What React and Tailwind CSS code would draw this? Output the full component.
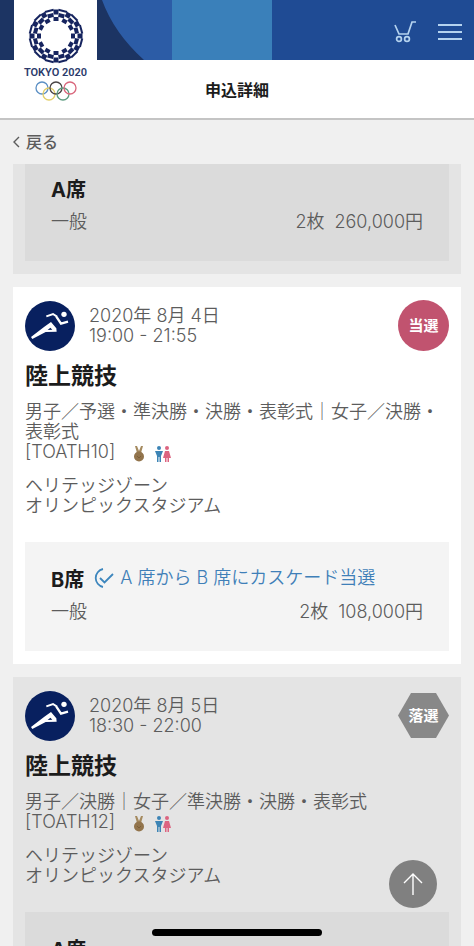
import React from 'react';

const applications = [
  {
    id: 'previous',
    won: false,
    continued: true,
    seat: { rank: 'A席', price: '260,000円' }
  },
  {
    id: 'TOATH10',
    won: true,
    date: '2020年 8月 4日',
    time: '19:00 - 21:55',
    sport: '陸上競技',
    detail: '男子／予選・準決勝・決勝・表彰式｜女子／決勝・表彰式',
    seat: { rank: 'B席', price: '108,000円', cascade: 'A 席から B 席にカスケード当選' }
  },
  {
    id: 'TOATH12',
    won: false,
    date: '2020年 8月 5日',
    time: '18:30 - 22:00',
    sport: '陸上競技',
    detail: '男子／決勝｜女子／準決勝・決勝・表彰式',
    seat: { rank: 'A席', price: '260,000円' }
  }
];

const emblemRings = [
  { radius: 26, width: 9, height: 2, count: 12, offset: 15 },
  { radius: 24, width: 5, height: 5, count: 12, offset: 0 },
  { radius: 21, width: 6, height: 4, count: 12, offset: 15 },
  { radius: 17, width: 5, height: 4, count: 12, offset: 0 }
];

const Emblem = () => (
  <svg viewBox="-29 -29 58 58" className="size-[58px]" fill="#16245f" aria-hidden="true">
    {emblemRings.map(ring =>
      Array.from({ length: ring.count }, (_, i) => (
        <rect
          key={`${ring.radius}-${i}`}
          x={-ring.width / 2}
          y={-ring.radius - ring.height / 2}
          width={ring.width}
          height={ring.height}
          transform={`rotate(${(360 / ring.count) * i + ring.offset})`}
        />
      ))
    )}
  </svg>
);

const Rings = () => (
  <svg viewBox="0 0 42 20" className="h-5 w-[42px]" fill="none" strokeWidth="1.3" aria-hidden="true">
    <circle cx="7" cy="7" r="6" stroke="#5b8fc4" />
    <circle cx="14" cy="13" r="6" stroke="#e3cf6a" />
    <circle cx="21" cy="7" r="6" stroke="#4a4444" />
    <circle cx="28" cy="13" r="6" stroke="#5d9c80" />
    <circle cx="35" cy="7" r="6" stroke="#d9677c" />
  </svg>
);

const AthleticsIcon = () => (
  <svg viewBox="0 0 150 150" className="size-[50px] shrink-0" role="img" aria-label="陸上競技">
    <circle cx="75" cy="75" r="75" fill="#08205f" />
    <g fill="none" stroke="#fff" strokeLinejoin="miter">
      <path d="M64 46 L84 39 L96 47" strokeWidth="6" />
      <path d="M94 47 L108 68 L129 62" strokeWidth="7" />
    </g>
    <circle cx="117" cy="40" r="8" fill="#fff" />
    <path
      d="M18 108 L58 77 L78 63 L94 82 L95 92 L62 93 L22 114 Z M68 87 L82 86 L76 80 Z"
      fill="#fff"
      fillRule="evenodd"
    />
  </svg>
);

const MedalIcon = () => (
  <svg viewBox="0 0 12 16" className="h-4 w-3" role="img" aria-label="メダル">
    <path d="M2 0 L4 0 L6 5 L8 0 L10 0 L8 7 L4 7 Z" fill="#a58a5f" />
    <circle cx="6" cy="10.5" r="5" fill="#92744c" />
    <path d="M4 10 L6 12 L8 10" fill="none" stroke="#7b5f3a" strokeWidth="1" />
  </svg>
);

const MixedIcon = () => (
  <svg viewBox="0 0 16 16" className="size-4" role="img" aria-label="男女">
    <circle cx="4" cy="2" r="2" fill="#3c84b5" />
    <path d="M0 5 H8 L6 10 V16 H4.5 V11 H3.5 V16 H2 V10 Z" fill="#3c84b5" />
    <circle cx="12" cy="2" r="2" fill="#dc6480" />
    <path d="M10 5 H14 L16 12 H14 V16 H12.5 V12 H11.5 V16 H10 V12 H8 Z" fill="#dc6480" />
  </svg>
);

const ResultBadge = ({ won }) => (
  <div className="relative ml-auto flex size-[51px] shrink-0 items-center justify-center text-[15px] leading-5 font-bold text-white">
    <svg viewBox="0 0 51 51" className="absolute inset-0" aria-hidden="true">
      {won ? (
        <circle cx="25.5" cy="25.5" r="25.5" fill="#c1536f" />
      ) : (
        <path d="M13 3 H38 L51 25.5 L38 48 H13 L0 25.5 Z" fill="#888" />
      )}
    </svg>
    <span className="relative">{won ? '当選' : '落選'}</span>
  </div>
);

const SeatBox = ({ seat, won, continued }) => (
  <div className={`px-[26px] pb-[29px] ${continued ? 'pt-3' : 'pt-6'} ${won ? 'bg-[#f4f4f4]' : 'bg-[#dbdbdb]'}`}>
    <div className="flex h-7 items-center gap-2">
      <h3 className="text-xl leading-7 font-bold text-[#1c1c1c]">{seat.rank}</h3>
      {seat.cascade && (
        <p className="flex items-center gap-1.5 pb-1 leading-5 text-[#3f7fb8]">
          <svg viewBox="0 0 22 20" className="h-5 w-[22px]" fill="none" stroke="#3d86bd" strokeWidth="1.8" aria-hidden="true">
            <path d="M11 1 A 9.2 9.2 0 0 0 11 19" />
            <path d="M8 10 L12.5 14.5 L21 6" />
          </svg>
          {seat.cascade}
        </p>
      )}
    </div>
    <div className="mt-2 flex justify-between leading-5">
      <span>一般</span>
      <span className="flex gap-2.5">
        <span>2枚</span>
        <span>{seat.price}</span>
      </span>
    </div>
  </div>
);

const ApplicationCard = ({ item }) => (
  <article className={`px-3 pb-[13px] ${item.won ? 'bg-white' : 'bg-[#e4e4e4]'}`}>
    {!item.continued && (
      <>
        <div className="flex items-center pt-[13px]">
          <AthleticsIcon />
          <p className="ml-3.5 leading-5">
            {item.date}
            <br />
            {item.time}
          </p>
          <ResultBadge won={item.won} />
        </div>
        <h2 className="mt-[11px] text-[23px] leading-7 font-bold text-[#1c1c1c]">{item.sport}</h2>
        <p className="mt-3 leading-5">{item.detail}</p>
        <div className="flex h-5 items-center leading-5">
          <span>[{item.id}]</span>
          <span className="ml-[18px] flex gap-2.5 pt-1">
            <MedalIcon />
            <MixedIcon />
          </span>
        </div>
        <p className="mt-3.5 mb-[26px] leading-5">
          ヘリテッジゾーン
          <br />
          オリンピックスタジアム
        </p>
      </>
    )}
    <SeatBox seat={item.seat} won={item.won} continued={item.continued} />
  </article>
);

const Header = () => (
  <header className="relative shrink-0 border-b-2 border-[#c4c4c4] bg-white">
    <div className="flex h-[60px] bg-[#1f4b94]">
      <svg viewBox="0 0 172 60" className="h-[60px] w-[172px] shrink-0" aria-hidden="true">
        <rect width="172" height="60" fill="#2c5ca6" />
        <path d="M0 0 H102 Q114 33 144 60 H0 Z" fill="#1c3463" />
      </svg>
      <div className="w-[100px] shrink-0 bg-[#3a80ba]" />
      <div className="flex flex-1 items-center justify-end gap-[22px] pt-1 pr-3">
        <button type="button" aria-label="カート">
          <svg viewBox="0 0 22 22" className="size-[22px]" fill="none" stroke="#b5d3ef" strokeWidth="1.7">
            <path d="M1 4 L5 13 H14 L18 1 H22" />
            <circle cx="5" cy="18" r="2.4" />
            <circle cx="13" cy="18" r="2.4" />
          </svg>
        </button>
        <button type="button" aria-label="メニュー">
          <svg viewBox="0 0 24 18" className="h-[18px] w-6" stroke="#b5d3ef" strokeWidth="1.8">
            <path d="M0 2 H24 M0 9 H24 M0 16 H24" />
          </svg>
        </button>
      </div>
    </div>
    <h1 className="flex h-[58px] items-center justify-center pt-0.5 text-base leading-6 font-bold text-[#1c1c1c]">申込詳細</h1>
    <a href="#top" className="absolute top-0 left-3.5 flex h-[118px] w-[83px] flex-col items-center bg-white pt-[7px]">
      <Emblem />
      <span className="font-['Roboto'] text-[11px] leading-4 font-semibold whitespace-nowrap text-[#2b3a6b]">TOKYO 2020</span>
      <Rings />
    </a>
  </header>
);

const App = () => (
  <div className="flex h-screen flex-col overflow-hidden bg-[#f0f0f0] font-['Inter','Noto_Sans_CJK_JP',sans-serif] text-[18px] font-[350] text-[#5c5c5c]">
    <Header />

    <nav className="flex h-11 shrink-0 items-center px-3">
      <a href="#list" className="flex items-center gap-1 text-base leading-6 font-medium">
        <svg viewBox="0 0 10 12" className="h-3 w-2.5" fill="none" stroke="#5c5c5c" strokeWidth="1.4" aria-hidden="true">
          <path d="M7 1 L2 6 L7 11" />
        </svg>
        戻る
      </a>
    </nav>

    <main id="list" className="flex flex-1 flex-col gap-[13px] overflow-y-auto px-[13px] [scrollbar-width:none]">
      {applications.map(item => (
        <ApplicationCard key={item.id} item={item} />
      ))}
    </main>

    <button
      type="button"
      aria-label="ページの先頭へ"
      className="fixed right-[37px] bottom-[38px] flex size-12 items-center justify-center rounded-full bg-[#808080]"
    >
      <svg viewBox="0 0 20 24" className="h-6 w-5" fill="none" stroke="#fff" strokeWidth="1.4">
        <path d="M10 23 V2 M1 11 L10 2 L19 11" />
      </svg>
    </button>
    <div className="fixed bottom-2.5 left-1/2 h-[7px] w-[170px] -translate-x-1/2 rounded-full bg-black" />
  </div>
);

export default App;
